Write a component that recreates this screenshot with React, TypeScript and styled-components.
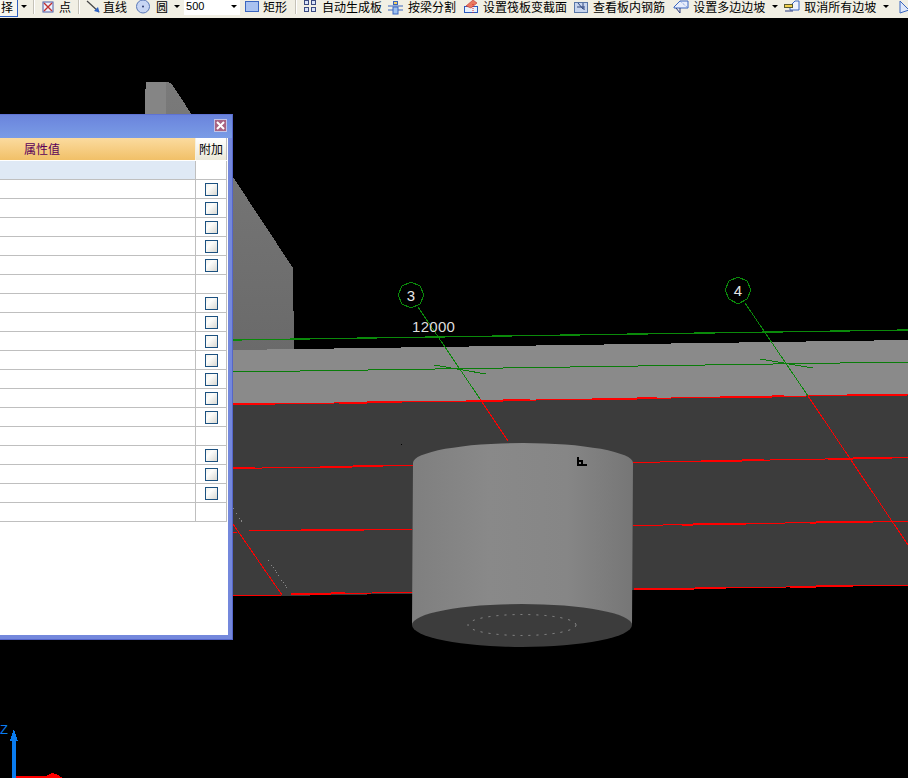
import React from "react";
import styled, { createGlobalStyle } from "styled-components";

const Global = createGlobalStyle`
  html, body { margin: 0; padding: 0; background: #000; }
  #root { width: 908px; height: 778px; overflow: hidden; }
  * { box-sizing: border-box; }
`;

const Page = styled.div`
  width: 908px;
  height: 778px;
  display: flex;
  flex-direction: column;
  background: #000;
  overflow: hidden;
  font-family: "Noto Sans CJK SC", "Liberation Sans", sans-serif;
  font-size: 12px;
`;

const Toolbar = styled.div`
  height: 18px;
  flex: none;
  display: flex;
  align-items: flex-start;
  background: #f1efe4;
  color: #000;
`;

const SelectedTool = styled.div`
  width: 18px;
  height: 17px;
  border-right: 1px solid #2f62c4;
  border-bottom: 1px solid #2f62c4;
  background: #f7f6ef;
  line-height: 14px;
  padding-left: 1px;
  flex: none;
`;

const Caret = styled.span<{ $ml: number }>`
  flex: none;
  width: 0;
  height: 0;
  margin: 5px 0 0 ${(p) => p.$ml}px;
  border-left: 3px solid transparent;
  border-right: 3px solid transparent;
  border-top: 3px solid #000;
`;

const Separator = styled.span<{ $ml: number }>`
  flex: none;
  width: 2px;
  height: 14px;
  margin-left: ${(p) => p.$ml}px;
  background: linear-gradient(90deg, #c5c2b8 50%, #fff 50%);
`;

const Tool = styled.div<{ $ml: number; $gap: number }>`
  flex: none;
  display: flex;
  align-items: flex-start;
  gap: ${(p) => p.$gap}px;
  margin-left: ${(p) => p.$ml}px;
  height: 16px;
  white-space: nowrap;
  svg { flex: none; display: block; }
`;

const ToolLabel = styled.span`
  display: block;
  line-height: 14px;
`;

const SizeBox = styled.div`
  flex: none;
  width: 56px;
  height: 15px;
  margin-left: 4px;
  background: #fff;
  display: flex;
  justify-content: space-between;
  padding: 0 3px 0 2px;
  font-family: "Liberation Sans", sans-serif;
  font-size: 11px;
  line-height: 12px;
`;

const Viewport = styled.div`
  position: relative;
  flex: 1;
  background: #000;
`;

const SceneSvg = styled.svg`
  display: block;
  width: 908px;
  height: 760px;
`;

const PropertyWindow = styled.div`
  position: absolute;
  left: 0;
  top: 96px;
  width: 233px;
  height: 526px;
  display: flex;
  flex-direction: column;
  border-top: 1px solid #5f73d3;
  border-right: 1px solid #5566c8;
  border-bottom: 1px solid #5566c8;
  background: #7488dc;
  padding: 0 4px 4px 0;
`;

const TitleBar = styled.div`
  height: 23px;
  flex: none;
  display: flex;
  align-items: center;
  justify-content: flex-end;
  margin-right: -4px;
  padding: 0 5px 2px 0;
  background: linear-gradient(180deg, #6a84dc 0%, #7a9ce6 100%);
`;

const CloseButton = styled.div`
  width: 13px;
  height: 13px;
  display: flex;
  align-items: center;
  justify-content: center;
  background: #a96483;
  border: 1px solid #c3c4e6;
  svg { display: block; }
`;

const Body = styled.div`
  flex: 1;
  background: #fff;
  padding: 0 1px 0 0;
`;

const HeaderRow = styled.div`
  height: 23px;
  display: grid;
  grid-template-columns: 196px 31px;
  color: #5a005a;
  line-height: 22px;
`;

const HeaderCell = styled.div`
  padding-left: 24px;
  height: 22px;
  background: linear-gradient(180deg, #fbdb9f 0%, #f1c068 100%);
  border-right: 1px solid #f5f0e0;
`;

const AttachHeader = styled.div`
  height: 22px;
  background: linear-gradient(180deg, #ffffff 0%, #ebe8d8 100%);
  color: #000;
  text-align: center;
  border-right: 1px solid #bfbfbf;
`;

const Row = styled.div`
  height: 19px;
  display: grid;
  grid-template-columns: 196px 31px;
  border-bottom: 1px solid #bfbfbf;
`;

const NameCell = styled.div<{ $shaded: boolean }>`
  background: ${(p) => (p.$shaded ? "#dfe9f5" : "#fff")};
  border-right: 1px solid #bfbfbf;
`;

const CheckCell = styled.div`
  border-right: 1px solid #bfbfbf;
  display: flex;
  align-items: center;
  justify-content: center;
  padding: 1px 0 0 1px;
`;

const CheckBox = styled.span`
  display: block;
  width: 13px;
  height: 13px;
  border: 1px solid #1c5180;
  background: linear-gradient(135deg, #f2f2ee 0%, #fdfdfb 35%, #d8d8d2 100%);
`;

/* A red edge of the model: one thin line with its thicker stepped stretches. */
const edge = (x1: number, y1: number, x2: number, y2: number, thick: [number, number][] = []) => {
  const f = (x: number) => y1 + ((x - x1) / (x2 - x1)) * (y2 - y1);
  return (
    <g stroke="#f00">
      <line x1={x1} y1={y1} x2={x2} y2={y2} strokeWidth={1} />
      {thick.map(([a, b], i) => (
        <line key={i} x1={a} y1={f(a)} x2={b} y2={f(b)} strokeWidth={2} />
      ))}
    </g>
  );
};

function Scene() {
  return (
    <SceneSvg viewBox="0 18 908 760" shapeRendering="crispEdges">
      <defs>
        <linearGradient id="cyl" x1="0" x2="1" y1="0" y2="0">
          <stop offset="0" stopColor="#7f7f7f" />
          <stop offset="0.35" stopColor="#898989" />
          <stop offset="0.7" stopColor="#868686" />
          <stop offset="1" stopColor="#767676" />
        </linearGradient>
        <linearGradient id="wedge" x1="0" x2="0" y1="0" y2="1">
          <stop offset="0" stopColor="#7a7a7a" />
          <stop offset="1" stopColor="#6a6a6a" />
        </linearGradient>
      </defs>

      <polygon points="146,82 167,82 167,135 145,135 145,89 146,89" fill="#858585" />
      <polygon points="166,82 171,83 293,268 294,352 160,352 166,135" fill="url(#wedge)" />

      <polygon points="233,350 908,340 908,395 233,405" fill="#8a8a8a" />
      <polygon points="233,405 908,394 908,585 282,596 233,596" fill="#3c3c3c" />

      <line x1="233" y1="340" x2="908" y2="330" stroke="#0a8a0a" strokeWidth="1.3" />
      <line x1="233" y1="372" x2="908" y2="362" stroke="#0a7d0a" strokeWidth="1" />
      <line x1="434" y1="365" x2="486" y2="374" stroke="#0a7d0a" />
      <line x1="760" y1="359" x2="813" y2="368" stroke="#0a7d0a" />

      {edge(233, 404.5, 908, 394.5, [[233, 275], [339, 402], [466, 530], [592, 657], [720, 784], [847, 908]])}
      {edge(233, 468.5, 413, 465.5, [[233, 255], [320, 383]])}
      {edge(633, 462.5, 908, 457.5, [[701, 764], [828, 892]])}
      {edge(249, 531, 413, 529, [[301, 364]])}
      {edge(233, 532, 237, 532)}
      {edge(633, 525.5, 908, 521, [[682, 746], [810, 873]])}
      {edge(233, 595.5, 281, 595.4)}
      {edge(291, 594, 413, 592.5, [[291, 345]])}
      {edge(634, 589.5, 908, 585, [[634, 726], [790, 853]])}

      <line x1="233" y1="524" x2="282" y2="595" stroke="#f00" />
      <line x1="233" y1="508" x2="242" y2="522" stroke="#888" strokeDasharray="1 2" />
      <line x1="268" y1="560" x2="287" y2="588" stroke="#888" strokeDasharray="1 2" />
      <rect x="401" y="444" width="1" height="1" fill="#000" />

      <polygon points="411,282 420,286 424,295 420,304 411,308 402,304 398,295 402,286" fill="none" stroke="#0a8a0a" />
      <polygon points="738,277 747,281 751,290 747,299 738,304 729,299 725,290 729,281" fill="none" stroke="#0a8a0a" />
      <line x1="418" y1="307" x2="480" y2="399" stroke="#0a8a0a" />
      <line x1="480" y1="399" x2="508" y2="441" stroke="#f00" />
      <line x1="745" y1="303" x2="808" y2="396" stroke="#0a8a0a" />
      <line x1="808" y1="396" x2="908" y2="545" stroke="#f00" />

      <text x="411" y="301" fill="#e6e6e6" fontFamily="Liberation Sans" fontSize="15" textAnchor="middle">3</text>
      <text x="738" y="296" fill="#e6e6e6" fontFamily="Liberation Sans" fontSize="15" textAnchor="middle">4</text>
      <text x="412" y="332" fill="#dedede" fontFamily="Liberation Sans" fontSize="15" letterSpacing="0.3">12000</text>

      <g shapeRendering="auto">
        <ellipse cx="522" cy="625" rx="110" ry="22" fill="#3c3c3c" />
        <path d="M412 625 L413 463 A110 20 0 0 1 633 463 L632 625 A110 21 0 0 0 412 625 Z" fill="url(#cyl)" />
        <ellipse cx="522" cy="625" rx="54" ry="10.5" fill="none" stroke="#a0a0a0" strokeWidth="0.8" strokeDasharray="2 6" />
      </g>

      <path d="M577 457 h2 v3 h4 v4 h4 v2 h-10 z M579 462 v2 h2 v-2 z" fill="#000" fillRule="evenodd" />

      <rect x="12" y="739" width="4" height="39" fill="#0a7cf0" />
      <polygon points="14,729 18,741 10,741" fill="#0a7cf0" />
      <text x="0" y="734" fill="#0a7cf0" fontFamily="Liberation Sans" fontSize="13">Z</text>
      <rect x="16" y="776" width="36" height="2" fill="#f00" />
      <polygon points="46,776 52,773 58,775 63,778 46,778" fill="#f00" />
    </SceneSvg>
  );
}

const Svg16: React.FC<{ children: React.ReactNode; w?: number }> = ({ children, w = 16 }) => (
  <svg width={w} height={16} viewBox={`0 0 ${w} 16`}>
    {children}
  </svg>
);

const PointIcon = () => (
  <Svg16 w={12}>
    <rect x="1" y="2" width="10" height="10" fill="#eef1fb" stroke="#4a5aa8" />
    <path d="M2 3 L10 11 M10 3 L2 11" stroke="#c03030" strokeWidth="1.4" />
  </Svg16>
);
const LineIcon = () => (
  <Svg16 w={15}>
    <path d="M1 1 L13 12" stroke="#444" strokeWidth="1.2" />
    <path d="M13.5 12.5 L8 11 L12 7 Z" fill="#2f62c4" />
  </Svg16>
);
const CircleIcon = () => (
  <Svg16 w={15}>
    <circle cx="7" cy="6.5" r="6.5" fill="#c7d5f3" stroke="#5a78b8" />
    <circle cx="7" cy="6.5" r="1" fill="#2a3a70" />
  </Svg16>
);
const RectIcon = () => (
  <Svg16 w={15}>
    <rect x="0.5" y="1.5" width="13" height="10" fill="#a9c2f0" stroke="#3a66c0" />
  </Svg16>
);
const GridIcon = () => (
  <Svg16 w={14}>
    {[1, 8].map((x) =>
      [0, 7].map((y) => <rect key={`${x}-${y}`} x={x + 0.5} y={y + 0.5} width="4" height="4" fill="#d8e2f8" stroke="#3a4a80" />)
    )}
  </Svg16>
);
const SplitIcon = () => (
  <Svg16 w={16}>
    <path d="M0 6 H15 M0 10 H15" stroke="#3a66c0" />
    <rect x="5.5" y="1.5" width="4" height="3" fill="#f5d060" stroke="#3a66c0" />
    <rect x="5" y="7" width="5" height="7" fill="#9cc0f0" stroke="#3a66c0" />
  </Svg16>
);
const SlabIcon = () => (
  <Svg16 w={16}>
    <rect x="1.5" y="6.5" width="13" height="6" fill="#e8f0fc" stroke="#2a5ac0" />
    <path d="M3 6 L10 0 L14 3 L8 8 Z" fill="#e87860" stroke="#c03030" strokeWidth="0.6" />
    <path d="M10 4 V13" stroke="#e02020" strokeDasharray="1 1" />
  </Svg16>
);
const RebarIcon = () => (
  <Svg16 w={15}>
    <rect x="0.5" y="2.5" width="13" height="10" fill="#c7d5ee" stroke="#5a78a8" />
    <path d="M4 3 L9 9 M9 3 V8 Q9 10 11 9 M3 7 H11" stroke="#304880" fill="none" />
  </Svg16>
);
const SlopeIcon = () => (
  <Svg16 w={17}>
    <path d="M1 7 L7 1 L15 1 V8 H1 Z" fill="#e8eefb" stroke="#3a66c0" />
    <path d="M7 1 L15 8" stroke="#6a8ed8" strokeDasharray="1 1" />
    <path d="M3 8 L7 13 M7 8 V13" stroke="#2a3a80" />
  </Svg16>
);
const CancelSlopeIcon = () => (
  <Svg16 w={16}>
    <path d="M6 6 L11 1 H15 V10 H6 Z" fill="#eef2fb" stroke="#3a66c0" />
    <rect x="0.5" y="4.5" width="8" height="3" fill="#f3d24e" stroke="#5a5a30" />
    <path d="M1 11 H9" stroke="#2a3a80" />
  </Svg16>
);
const EdgeIcon = () => (
  <Svg16 w={9}>
    <path d="M1 13 L1 1 L10 10 Z" fill="#dfe8fa" stroke="#3a66c0" />
  </Svg16>
);

const rowKinds = [
  "s", "c", "c", "c", "c", "c", "n", "c", "c", "c", "c", "c", "c", "c", "n", "c", "c", "c", "n",
];

export default function App() {
  return (
    <Page>
      <Global />
      <Toolbar>
        <SelectedTool>择</SelectedTool>
        <Caret $ml={3} />
        <Separator $ml={6} />
        <Tool $ml={7} $gap={5}><PointIcon /><ToolLabel>点</ToolLabel></Tool>
        <Separator $ml={7} />
        <Tool $ml={6} $gap={2}><LineIcon /><ToolLabel>直线</ToolLabel></Tool>
        <Tool $ml={9} $gap={5}><CircleIcon /><ToolLabel>圆</ToolLabel></Tool>
        <Caret $ml={6} />
        <SizeBox>500<Caret $ml={0} /></SizeBox>
        <Tool $ml={5} $gap={3}><RectIcon /><ToolLabel>矩形</ToolLabel></Tool>
        <Separator $ml={8} />
        <Tool $ml={6} $gap={5}><GridIcon /><ToolLabel>自动生成板</ToolLabel></Tool>
        <Tool $ml={6} $gap={4}><SplitIcon /><ToolLabel>按梁分割</ToolLabel></Tool>
        <Tool $ml={7} $gap={4}><SlabIcon /><ToolLabel>设置筏板变截面</ToolLabel></Tool>
        <Tool $ml={7} $gap={4}><RebarIcon /><ToolLabel>查看板内钢筋</ToolLabel></Tool>
        <Tool $ml={8} $gap={3}><SlopeIcon /><ToolLabel>设置多边边坡</ToolLabel></Tool>
        <Caret $ml={7} />
        <Tool $ml={6} $gap={4}><CancelSlopeIcon /><ToolLabel>取消所有边坡</ToolLabel></Tool>
        <Caret $ml={7} />
        <Tool $ml={10} $gap={0}><EdgeIcon /></Tool>
      </Toolbar>
      <Viewport>
        <Scene />
        <PropertyWindow>
          <TitleBar>
            <CloseButton>
              <svg width="9" height="9" viewBox="0 0 9 9">
                <path d="M1 1 L8 8 M8 1 L1 8" stroke="#fff" strokeWidth="2" />
              </svg>
            </CloseButton>
          </TitleBar>
          <Body>
            <HeaderRow>
              <HeaderCell>属性值</HeaderCell>
              <AttachHeader>附加</AttachHeader>
            </HeaderRow>
            {rowKinds.map((k, i) => (
              <Row key={i}>
                <NameCell $shaded={k === "s"} />
                <CheckCell>{k === "c" && <CheckBox />}</CheckCell>
              </Row>
            ))}
          </Body>
        </PropertyWindow>
      </Viewport>
    </Page>
  );
}
